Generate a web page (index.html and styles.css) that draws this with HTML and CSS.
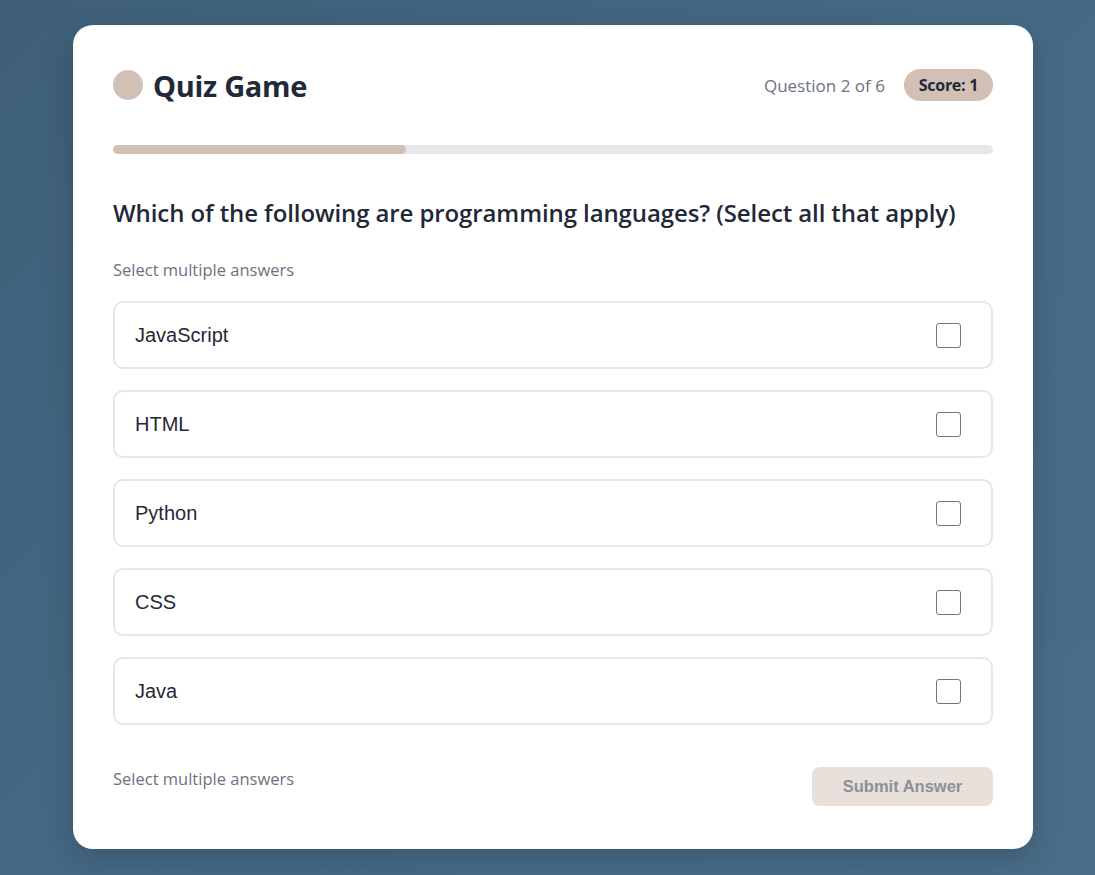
FILE: index.html
```html
<!DOCTYPE html>
<html lang="en">
<head>
<meta charset="utf-8">
<title>Quiz Game</title>
<link rel="stylesheet" href="styles.css">
</head>
<body>
<main class="card">
  <header class="header">
    <div class="brand">
      <span class="logo"></span>
      <h1 class="title">Quiz Game</h1>
    </div>
    <div class="meta">
      <span class="counter">Question 2 of 6</span>
      <span class="score">Score: 1</span>
    </div>
  </header>
  <div class="progress"><div class="progress-fill" style="width:33.333%"></div></div>
  <h2 class="question">Which of the following are programming languages? (Select all that apply)</h2>
  <p class="hint">Select multiple answers</p>
  <ul class="options">
    <li class="option"><span class="option-text">JavaScript</span><span class="checkbox"></span></li>
    <li class="option"><span class="option-text">HTML</span><span class="checkbox"></span></li>
    <li class="option"><span class="option-text">Python</span><span class="checkbox"></span></li>
    <li class="option"><span class="option-text">CSS</span><span class="checkbox"></span></li>
    <li class="option"><span class="option-text">Java</span><span class="checkbox"></span></li>
  </ul>
  <footer class="footer">
    <span class="hint footer-hint">Select multiple answers</span>
    <button class="submit" disabled>Submit Answer</button>
  </footer>
</main>
</body>
</html>
```
FILE: styles.css
```css
* { box-sizing: border-box; }
html, body { height: 100%; }
body {
  margin: 0;
  background: linear-gradient(135deg, #3f5f78 0%, #456a85 50%, #4a6d88 100%);
  font-family: "Open Sans", "Noto Sans", sans-serif;
  padding: 25px 0 0 73px;
}
.card {
  width: 960px;
  height: 824px;
  background: #ffffff;
  border-radius: 20px;
  box-shadow: 0 10px 30px rgba(0, 0, 0, 0.18);
  padding: 40px;
  display: flex;
  flex-direction: column;
}
.header {
  display: flex;
  justify-content: space-between;
  align-items: center;
  height: 40px;
}
.brand { display: flex; align-items: center; gap: 10px; }
.logo {
  width: 30px; height: 30px; border-radius: 50%;
  background: #d3c0b5;
}
.title {
  margin: 0;
  font-size: 29px;
  font-weight: 700;
  color: #1f2937;
  letter-spacing: -0.3px;
}
.meta { display: flex; align-items: center; gap: 19px; }
.counter { font-size: 17px; color: #6b7280; }
.score {
  background: #d3c0b5;
  border-radius: 16px;
  height: 32px;
  padding: 0 15px;
  display: flex; align-items: center;
  font-size: 16px; font-weight: 700; color: #1f2937;
  letter-spacing: -0.3px;
}
.progress {
  margin-top: 40px;
  height: 9px;
  border-radius: 5px;
  background: #e5e7eb;
  overflow: hidden;
}
.progress-fill { height: 100%; background: #d3c0b5; border-radius: 5px; }
.question {
  margin: 44px 0 0;
  font-size: 24px;
  font-weight: 600;
  color: #1f2937;
  line-height: 30px;
  letter-spacing: -0.1px;
}
.hint {
  font-size: 16.5px;
  color: #6b7280;
}
.question + .hint { margin: 31px 0 0; line-height: 22px; }
.options {
  list-style: none;
  margin: 20px 0 0;
  padding: 0;
  display: flex;
  flex-direction: column;
  gap: 21px;
}
.option {
  height: 68px;
  border: 2px solid #e5e7eb;
  border-radius: 10px;
  padding: 0 30px 0 20px;
  display: flex;
  align-items: center;
  justify-content: space-between;
  font-family: "Liberation Sans", Arial, sans-serif;
  font-size: 20px;
  color: #1f2937;
}
.checkbox {
  width: 25px; height: 25px;
  border: 1.5px solid #767676;
  border-radius: 3px;
  background: #fff;
}
.footer {
  margin-top: 42px;
  display: flex;
  justify-content: space-between;
  align-items: flex-start;
}
.footer-hint { line-height: 24px; }
.submit {
  width: 181px; height: 39px;
  border: none;
  border-radius: 8px;
  background: #e8e0db;
  color: #8b9096;
  font-family: "Liberation Sans", Arial, sans-serif;
  font-size: 16.5px;
  font-weight: 700;
}
```
